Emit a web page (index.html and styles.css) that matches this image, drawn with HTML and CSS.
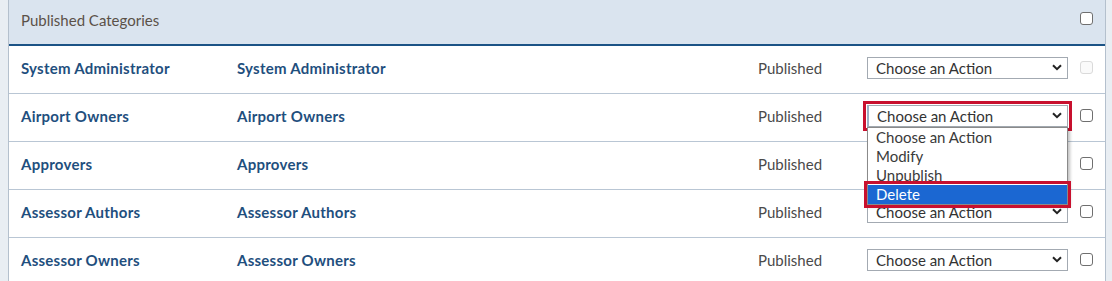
FILE: index.html
```html
<!DOCTYPE html>
<html>
<head>
<meta charset="utf-8">
<link rel="stylesheet" href="styles.css">
</head>
<body>
<div class="page">
  <div class="panel">
    <div class="head">
      <span class="head-title">Published Categories</span>
      <span class="cb"></span>
    </div>

    <div class="row">
      <span class="name">System Administrator</span>
      <span class="name">System Administrator</span>
      <span class="status">Published</span>
      <div class="sel"><span class="sel-text">Choose an Action</span><svg class="chev" viewBox="0 0 10 7" width="10" height="7"><path d="M1 1.2 L5 5.2 L9 1.2" fill="none" stroke="#222" stroke-width="2"/></svg></div>
      <span class="cb cb-disabled"></span>
    </div>

    <div class="row">
      <span class="name">Airport Owners</span>
      <span class="name">Airport Owners</span>
      <span class="status">Published</span>
      <div class="sel sel-open"><span class="sel-text">Choose an Action</span><svg class="chev" viewBox="0 0 10 7" width="10" height="7"><path d="M1 1.2 L5 5.2 L9 1.2" fill="none" stroke="#222" stroke-width="2"/></svg>
        <ul class="menu">
          <li class="opt">Choose an Action</li>
          <li class="opt">Modify</li>
          <li class="opt">Unpublish</li>
          <li class="opt opt-active">Delete</li>
        </ul>
      </div>
      <span class="cb"></span>
    </div>

    <div class="row">
      <span class="name">Approvers</span>
      <span class="name">Approvers</span>
      <span class="status">Published</span>
      <div class="sel sel-hidden"><svg class="chev" viewBox="0 0 10 7" width="10" height="7"><path d="M1 1.2 L5 5.2 L9 1.2" fill="none" stroke="#222" stroke-width="2"/></svg></div>
      <span class="cb"></span>
    </div>

    <div class="row">
      <span class="name">Assessor Authors</span>
      <span class="name">Assessor Authors</span>
      <span class="status">Published</span>
      <div class="sel"><span class="sel-text">Choose an Action</span><svg class="chev" viewBox="0 0 10 7" width="10" height="7"><path d="M1 1.2 L5 5.2 L9 1.2" fill="none" stroke="#222" stroke-width="2"/></svg></div>
      <span class="cb"></span>
    </div>

    <div class="row">
      <span class="name">Assessor Owners</span>
      <span class="name">Assessor Owners</span>
      <span class="status">Published</span>
      <div class="sel"><span class="sel-text">Choose an Action</span><svg class="chev" viewBox="0 0 10 7" width="10" height="7"><path d="M1 1.2 L5 5.2 L9 1.2" fill="none" stroke="#222" stroke-width="2"/></svg></div>
      <span class="cb"></span>
    </div>
  </div>
</div>
</body>
</html>
```

FILE: styles.css
```css
html, body {
  margin: 0;
  padding: 0;
  background: #e9eef3;
  font-family: "Lato", "Noto Sans", sans-serif;
  font-size: 15px;
  overflow: hidden;
}
.page {
  padding: 0 6px 0 8px;
  height: 281px;
}
.panel {
  background: #fff;
  border-left: 1px solid #b4c0cd;
  border-right: 1px solid #b4c0cd;
  height: 100%;
}
.head {
  height: 46px;
  box-sizing: border-box;
  background: #dae4ef;
  border-bottom: 2px solid #1b5386;
  display: flex;
  align-items: center;
  justify-content: space-between;
  padding: 0 12px 4px 12px;
}
.head-title {
  color: #5a5148;
  font-size: 15px;
}
.head .cb {
  margin-top: -3px;
}
.row {
  display: grid;
  grid-template-columns: 216px 521px 109px 213px 13px;
  align-items: center;
  height: 48px;
  box-sizing: border-box;
  padding: 0 0 4px 12px;
  border-bottom: 1px solid #b9c6d4;
}
.name {
  color: #1f4f7e;
  font-weight: 700;
  font-size: 15px;
  letter-spacing: 0.25px;
}
.status {
  color: #4a4a4a;
  font-size: 15px;
}
.sel {
  position: relative;
  width: 201px;
  height: 22px;
  box-sizing: border-box;
  border: 1px solid #a3aab2;
  background: #fff;
  display: flex;
  align-items: center;
  padding-left: 8px;
  color: #333;
  font-size: 15px;
}
.sel-text {
  flex: 1;
}
.sel-hidden {
  justify-content: flex-end;
}
.chev {
  margin-right: 5px;
}
.sel-open {
  outline: 3px solid #c8102e;
  outline-offset: 1px;
  border-left: 2px solid #9bb0c6;
}
.menu {
  position: absolute;
  top: 21px;
  left: -2px;
  width: 201px;
  margin: 0;
  padding: 0;
  list-style: none;
  background: #fff;
  border: 1px solid #8a8a8a;
  box-sizing: border-box;
  box-shadow: 2px 2px 3px rgba(0,0,0,0.25);
  z-index: 5;
}
.opt {
  height: 19px;
  line-height: 19px;
  padding-left: 8px;
  color: #3a3a3a;
  font-size: 15px;
}
.opt-active {
  background: #1b67d2;
  color: #fff;
  outline: 3px solid #c8102e;
  outline-offset: 1px;
}
.cb {
  display: block;
  width: 13px;
  height: 13px;
  box-sizing: border-box;
  border: 1px solid #6f6f6f;
  border-radius: 3px;
  background: #fff;
}
.cb-disabled {
  border-color: #dadada;
  background: #fafafa;
}
```
